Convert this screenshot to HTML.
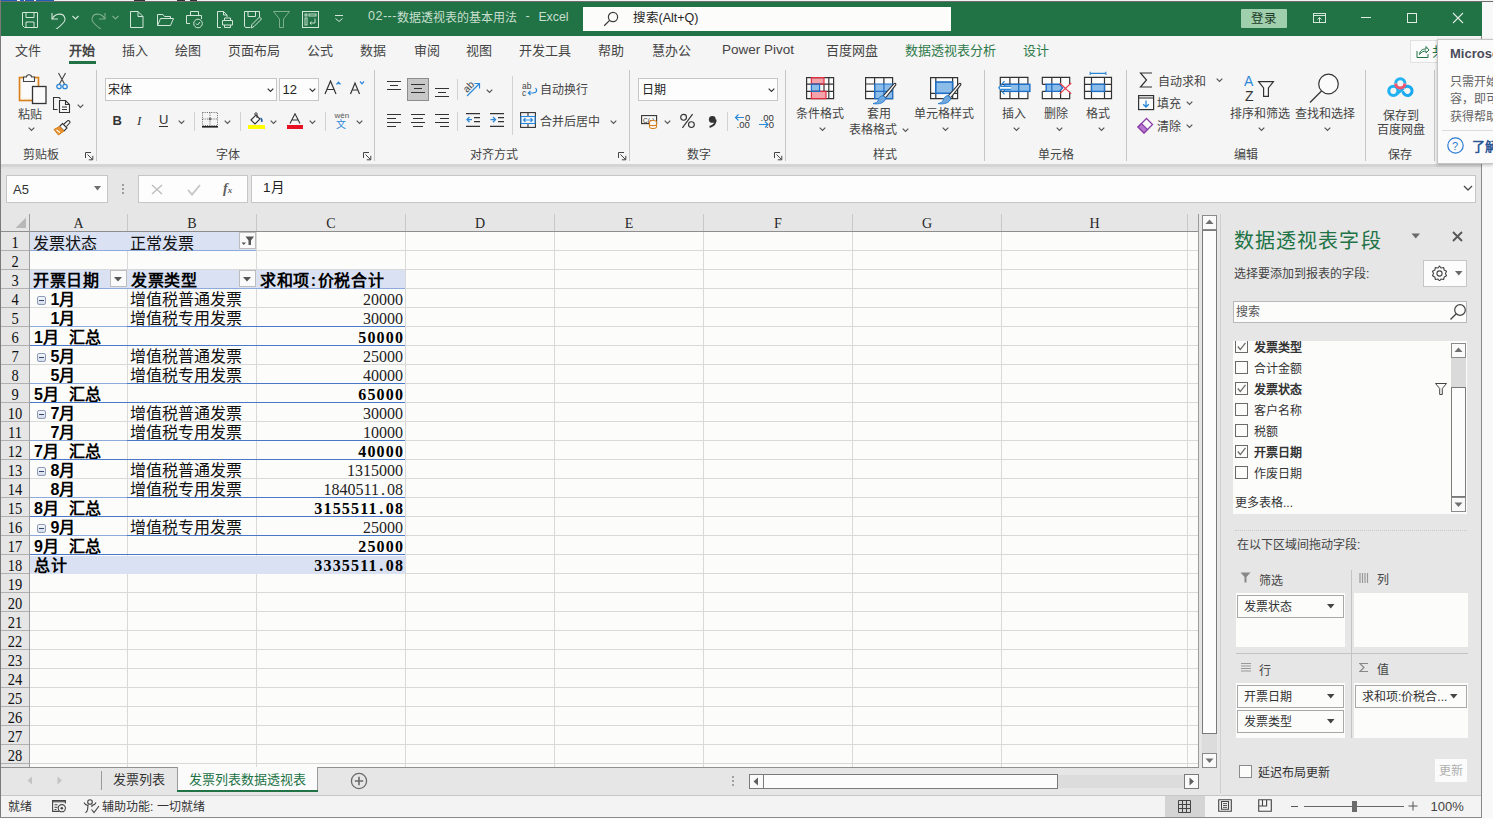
<!DOCTYPE html><html lang="zh-CN"><head><meta charset="utf-8"><style>
html,body{margin:0;padding:0;}body{width:1493px;height:819px;overflow:hidden;position:relative;background:#f7f7f7;font-family:"Liberation Sans",sans-serif;}
div,svg{position:absolute;box-sizing:border-box;white-space:nowrap;}
</style></head><body>
<div style="left:0px;top:0px;width:1493px;height:2px;background:#6d6d6d"></div>
<div style="left:0px;top:0px;width:1493px;height:1px;background:#f2f2f2"></div>
<div style="left:0px;top:0px;width:17px;height:1px;background:#1f5fb8"></div>
<div style="left:20px;top:0px;width:4px;height:1px;background:#1f5fb8"></div>
<div style="left:25px;top:0px;width:9px;height:1px;background:#1f5fb8"></div>
<div style="left:36px;top:0px;width:18px;height:1px;background:#1f5fb8"></div>
<div style="left:134px;top:0px;width:11px;height:1px;background:#333"></div>
<div style="left:177px;top:0px;width:8px;height:1px;background:#333"></div>
<div style="left:190px;top:0px;width:7px;height:1px;background:#333"></div>
<div style="left:0px;top:2px;width:1482px;height:34px;background:#217346"></div>
<div style="left:0px;top:0px;width:1px;height:819px;background:#7a7a7a"></div>
<div style="left:1481px;top:36px;width:1px;height:783px;background:#8a8a8a"></div>
<div style="left:1482px;top:2px;width:11px;height:817px;background:#f8f8f8"></div>
<div style="left:368px;top:10.38px;font-size:12.5px;line-height:12.5px;color:#c8dfce;font-family:'Liberation Sans',sans-serif;letter-spacing:0.5px">02---</div>
<div style="left:397.2px;top:12.40px;font-size:12px;line-height:12px;color:#c8dfce;font-family:'Liberation Sans',sans-serif;">数据透视表的基本用法</div>
<div style="left:525.5px;top:10.38px;font-size:12.5px;line-height:12.5px;color:#c8dfce;font-family:'Liberation Sans',sans-serif;">-</div>
<div style="left:538.4px;top:10.90px;font-size:12.3px;line-height:12.3px;color:#c8dfce;font-family:'Liberation Sans',sans-serif;">Excel</div>
<div style="left:583px;top:7px;width:368px;height:24px;background:#fcfcfa"></div>
<svg style="left:603px;top:11px;" width="16" height="16" viewBox="0 0 16 16"><circle cx="10" cy="6" r="4.6" fill="none" stroke="#3c3c3c" stroke-width="1.2"/><line x1="6.6" y1="9.4" x2="1.2" y2="14.8" stroke="#3c3c3c" stroke-width="1.3"/></svg>
<div style="left:632.5px;top:12.42px;font-size:12.5px;line-height:12.5px;color:#262626;font-family:'Liberation Sans',sans-serif;">搜索(Alt+Q)</div>
<div style="left:1241px;top:9px;width:46px;height:19px;background:#9fcfad;border-radius:1px"></div>
<div style="left:1251px;top:13.42px;font-size:12.5px;line-height:12.5px;color:#1d3b27;font-family:'Liberation Sans',sans-serif;">登录</div>
<svg style="left:1312px;top:12px;" width="16" height="12" viewBox="0 0 16 12"><rect x="1.5" y="1.5" width="12" height="9" fill="none" stroke="#d5e6da" stroke-width="1"/><line x1="1.5" y1="3.5" x2="13.5" y2="3.5" stroke="#d5e6da"/><path d="M7.5 10 V5.5 M5.5 7.5 L7.5 5.5 L9.5 7.5" fill="none" stroke="#d5e6da"/></svg>
<div style="left:1361px;top:17px;width:10px;height:1px;background:#e0ece3"></div>
<div style="left:1407px;top:13px;width:10px;height:10px;border:1px solid #e0ece3"></div>
<svg style="left:1452px;top:12px;" width="12" height="12" viewBox="0 0 12 12"><path d="M1 1 L11 11 M11 1 L1 11" stroke="#e0ece3" stroke-width="1.1"/></svg>
<svg style="left:21px;top:11px;" width="18" height="18" viewBox="0 0 18 18"><path d="M1.5 1.5 H16.5 V16.5 H3.5 L1.5 14.5 Z" fill="none" stroke="#d4e6d9"/><path d="M5 1.5 V6.5 H13 V1.5" fill="none" stroke="#d4e6d9"/><path d="M5 16.5 V11 H13 V16.5" fill="none" stroke="#d4e6d9"/></svg>
<svg style="left:50px;top:11px;" width="18" height="18" viewBox="0 0 18 18"><path d="M2 2 V8 H8" fill="none" stroke="#d4e6d9" stroke-width="1.1"/><path d="M2 8 C5 2 14 1 15 8 C15.5 11 12 14 5 19" fill="none" stroke="#d4e6d9" stroke-width="1.1"/></svg>
<svg style="left:72px;top:15px;" width="8" height="6" viewBox="0 0 8 6"><path d="M0.5 1 L3.5 4 L6.5 1" fill="none" stroke="#d4e6d9" stroke-width="1.1"/></svg>
<svg style="left:90px;top:11px;" width="18" height="18" viewBox="0 0 18 18"><path d="M15 2 V8 H9" fill="none" stroke="#7fae8c" stroke-width="1.1"/><path d="M15 8 C12 2 3 1 2 8 C1.5 11 5 14 12 19" fill="none" stroke="#7fae8c" stroke-width="1.1"/></svg>
<svg style="left:112px;top:15px;" width="8" height="6" viewBox="0 0 8 6"><path d="M0.5 1 L3.5 4 L6.5 1" fill="none" stroke="#7fae8c" stroke-width="1.1"/></svg>
<svg style="left:130px;top:11px;" width="14" height="18" viewBox="0 0 14 18"><path d="M0.5 0.5 H8 L13 5.5 V16.5 H0.5 Z M8 0.5 V5.5 H13" fill="none" stroke="#d4e6d9"/></svg>
<svg style="left:157px;top:13px;" width="18" height="14" viewBox="0 0 18 14"><path d="M0.5 12.5 V1.5 H6 L7.5 3.5 H13.5 V5.5 M0.5 12.5 L3.5 5.5 H16.5 L13.5 12.5 Z" fill="none" stroke="#d4e6d9"/></svg>
<svg style="left:186px;top:11px;" width="18" height="18" viewBox="0 0 18 18"><path d="M4.5 4.5 V0.5 H12.5 V4.5 M4 12.5 H0.5 V4.5 H15.5 V8" fill="none" stroke="#d4e6d9"/><circle cx="12" cy="12.5" r="4.3" fill="none" stroke="#d4e6d9"/><path d="M10 12.5 L11.5 14 L14 11" fill="none" stroke="#d4e6d9"/></svg>
<svg style="left:217px;top:11px;" width="16" height="18" viewBox="0 0 16 18"><path d="M4 16.5 H0.5 V0.5 H6.5 L10 4 M6.5 0.5 V4 H10 V6" fill="none" stroke="#d4e6d9"/><path d="M5.5 9.5 H15.5 V14 H5.5 Z M7.5 9.5 V7 H13.5 V9.5 M7.5 14 V16.5 H13.5 V14" fill="none" stroke="#d4e6d9"/></svg>
<svg style="left:244px;top:11px;" width="18" height="18" viewBox="0 0 18 18"><path d="M6 16.5 H1.5 L0.5 15 V0.5 H15.5 V6 M4 0.5 V5.5 H11.5 V0.5" fill="none" stroke="#d4e6d9"/><path d="M7 17 L8 13.5 L15.5 6 L17.5 8 L10 15.5 Z" fill="none" stroke="#d4e6d9"/></svg>
<svg style="left:273px;top:11px;" width="18" height="18" viewBox="0 0 18 18"><path d="M0.5 0.5 H16.5 L10.5 8 V16.5 H6.5 V8 Z" fill="none" stroke="#7fae8c"/></svg>
<svg style="left:302px;top:11px;" width="18" height="18" viewBox="0 0 18 18"><rect x="0.5" y="0.5" width="16" height="16" fill="none" stroke="#d4e6d9"/><rect x="3" y="3" width="2" height="2" fill="none" stroke="#d4e6d9" stroke-width="0.9"/><rect x="7" y="3" width="7" height="2" fill="none" stroke="#d4e6d9" stroke-width="0.9"/><rect x="3" y="7" width="2" height="7" fill="none" stroke="#d4e6d9" stroke-width="0.9"/><path d="M13 7.5 V12 H8 M9.5 10.5 L8 12 L9.5 13.5" fill="none" stroke="#d4e6d9" stroke-width="0.9"/></svg>
<svg style="left:334px;top:15px;" width="10" height="8" viewBox="0 0 10 8"><line x1="1" y1="0.5" x2="9" y2="0.5" stroke="#d4e6d9"/><path d="M1.5 3.5 L5 6.5 L8.5 3.5" fill="none" stroke="#d4e6d9"/></svg>
<div style="left:1px;top:36px;width:1480px;height:128px;background:#f5f5f5"></div>
<div style="left:15px;top:43.64px;font-size:13px;line-height:13px;color:#444444;font-family:'Liberation Sans',sans-serif;">文件</div>
<div style="left:69px;top:43.64px;font-size:13px;line-height:13px;color:#444444;font-family:'Liberation Sans',sans-serif;font-weight:bold;">开始</div>
<div style="left:122px;top:43.64px;font-size:13px;line-height:13px;color:#444444;font-family:'Liberation Sans',sans-serif;">插入</div>
<div style="left:175px;top:43.64px;font-size:13px;line-height:13px;color:#444444;font-family:'Liberation Sans',sans-serif;">绘图</div>
<div style="left:228px;top:43.64px;font-size:13px;line-height:13px;color:#444444;font-family:'Liberation Sans',sans-serif;">页面布局</div>
<div style="left:307px;top:43.64px;font-size:13px;line-height:13px;color:#444444;font-family:'Liberation Sans',sans-serif;">公式</div>
<div style="left:360px;top:43.64px;font-size:13px;line-height:13px;color:#444444;font-family:'Liberation Sans',sans-serif;">数据</div>
<div style="left:414px;top:43.64px;font-size:13px;line-height:13px;color:#444444;font-family:'Liberation Sans',sans-serif;">审阅</div>
<div style="left:466px;top:43.64px;font-size:13px;line-height:13px;color:#444444;font-family:'Liberation Sans',sans-serif;">视图</div>
<div style="left:519px;top:43.64px;font-size:13px;line-height:13px;color:#444444;font-family:'Liberation Sans',sans-serif;">开发工具</div>
<div style="left:598px;top:43.64px;font-size:13px;line-height:13px;color:#444444;font-family:'Liberation Sans',sans-serif;">帮助</div>
<div style="left:652px;top:43.64px;font-size:13px;line-height:13px;color:#444444;font-family:'Liberation Sans',sans-serif;">慧办公</div>
<div style="left:826px;top:43.64px;font-size:13px;line-height:13px;color:#444444;font-family:'Liberation Sans',sans-serif;">百度网盘</div>
<div style="left:722px;top:42.74px;font-size:13.5px;line-height:13.5px;color:#444444;font-family:'Liberation Sans',sans-serif;">Power Pivot</div>
<div style="left:905px;top:43.64px;font-size:13px;line-height:13px;color:#2f7a4a;font-family:'Liberation Sans',sans-serif;">数据透视表分析</div>
<div style="left:1023px;top:43.64px;font-size:13px;line-height:13px;color:#2f7a4a;font-family:'Liberation Sans',sans-serif;">设计</div>
<div style="left:69px;top:61px;width:27px;height:3px;background:#217346"></div>
<div style="left:1410px;top:40px;width:30px;height:23px;background:#fbfbfb;border:1px solid #e1e1e1"></div>
<svg style="left:1416px;top:45px;" width="14" height="14" viewBox="0 0 14 14"><path d="M1 6 V12.5 H12 V9" fill="none" stroke="#217346"/><path d="M3.5 9.5 C4 5 7 4 10 4 V1.5 L13 5 L10 8 V6 C7.5 6 5 7 3.5 9.5Z" fill="none" stroke="#217346"/></svg>
<div style="left:1px;top:166px;width:1480px;height:48px;background:#e6e6e6"></div>
<div style="left:1px;top:164px;width:1480px;height:3px;background:#d4d4d4"></div>
<div style="left:1px;top:167px;width:1480px;height:2px;background:#e1e1e1"></div>
<div style="left:6px;top:175px;width:102px;height:28px;background:#fdfdfd;border:1px solid #c6c6c6"></div>
<div style="left:13px;top:183.31px;font-size:13px;line-height:13px;color:#333;font-family:'Liberation Sans',sans-serif;">A5</div>
<svg style="left:94px;top:186px;" width="8" height="5" viewBox="0 0 8 5"><path d="M0 0 H7 L3.5 4.5Z" fill="#6e6e6e"/></svg>
<div style="left:122px;top:184px;width:2px;height:2px;background:#9c9c9c"></div>
<div style="left:122px;top:188px;width:2px;height:2px;background:#9c9c9c"></div>
<div style="left:122px;top:192px;width:2px;height:2px;background:#9c9c9c"></div>
<div style="left:138px;top:175px;width:110px;height:28px;background:#fdfdfd;border:1px solid #c6c6c6"></div>
<svg style="left:151px;top:184px;" width="12" height="11" viewBox="0 0 12 11"><path d="M1 1 L11 10 M11 1 L1 10" stroke="#bdbdbd" stroke-width="1.4"/></svg>
<svg style="left:187px;top:184px;" width="14" height="12" viewBox="0 0 14 12"><path d="M1 6 L5 10.5 L13 1" fill="none" stroke="#c5c5c5" stroke-width="1.8"/></svg>
<div style="left:223px;top:182.18px;font-size:14px;line-height:14px;color:#5f5f5f;font-family:'Liberation Serif',serif;font-weight:bold;"><i>f</i><span style='font-size:9px'><i>x</i></span></div>
<div style="left:251px;top:175px;width:1225px;height:28px;background:#fdfdfd;border:1px solid #c6c6c6"></div>
<div style="left:263px;top:181.45px;font-size:13.5px;line-height:13.5px;color:#222;font-family:'Liberation Sans',sans-serif;">1月</div>
<svg style="left:1463px;top:185px;" width="10" height="7" viewBox="0 0 10 7"><path d="M1 1 L5 5 L9 1" fill="none" stroke="#505050" stroke-width="1.4"/></svg>
<div style="left:1px;top:214px;width:1198px;height:553px;background:#e6e6e6"></div>
<div style="left:30px;top:232px;width:1168px;height:535px;background:#fcfcfb"></div>
<div style="left:30px;top:250px;width:1168px;height:1px;background:#d9d9d9"></div>
<div style="left:30px;top:269px;width:1168px;height:1px;background:#d9d9d9"></div>
<div style="left:30px;top:288px;width:1168px;height:1px;background:#d9d9d9"></div>
<div style="left:30px;top:307px;width:1168px;height:1px;background:#d9d9d9"></div>
<div style="left:30px;top:326px;width:1168px;height:1px;background:#d9d9d9"></div>
<div style="left:30px;top:345px;width:1168px;height:1px;background:#d9d9d9"></div>
<div style="left:30px;top:364px;width:1168px;height:1px;background:#d9d9d9"></div>
<div style="left:30px;top:383px;width:1168px;height:1px;background:#d9d9d9"></div>
<div style="left:30px;top:402px;width:1168px;height:1px;background:#d9d9d9"></div>
<div style="left:30px;top:421px;width:1168px;height:1px;background:#d9d9d9"></div>
<div style="left:30px;top:440px;width:1168px;height:1px;background:#d9d9d9"></div>
<div style="left:30px;top:459px;width:1168px;height:1px;background:#d9d9d9"></div>
<div style="left:30px;top:478px;width:1168px;height:1px;background:#d9d9d9"></div>
<div style="left:30px;top:497px;width:1168px;height:1px;background:#d9d9d9"></div>
<div style="left:30px;top:516px;width:1168px;height:1px;background:#d9d9d9"></div>
<div style="left:30px;top:535px;width:1168px;height:1px;background:#d9d9d9"></div>
<div style="left:30px;top:554px;width:1168px;height:1px;background:#d9d9d9"></div>
<div style="left:30px;top:573px;width:1168px;height:1px;background:#d9d9d9"></div>
<div style="left:30px;top:592px;width:1168px;height:1px;background:#d9d9d9"></div>
<div style="left:30px;top:611px;width:1168px;height:1px;background:#d9d9d9"></div>
<div style="left:30px;top:630px;width:1168px;height:1px;background:#d9d9d9"></div>
<div style="left:30px;top:649px;width:1168px;height:1px;background:#d9d9d9"></div>
<div style="left:30px;top:668px;width:1168px;height:1px;background:#d9d9d9"></div>
<div style="left:30px;top:687px;width:1168px;height:1px;background:#d9d9d9"></div>
<div style="left:30px;top:706px;width:1168px;height:1px;background:#d9d9d9"></div>
<div style="left:30px;top:725px;width:1168px;height:1px;background:#d9d9d9"></div>
<div style="left:30px;top:744px;width:1168px;height:1px;background:#d9d9d9"></div>
<div style="left:30px;top:763px;width:1168px;height:1px;background:#d9d9d9"></div>
<div style="left:127px;top:232px;width:1px;height:535px;background:#d9d9d9"></div>
<div style="left:256px;top:232px;width:1px;height:535px;background:#d9d9d9"></div>
<div style="left:405px;top:232px;width:1px;height:535px;background:#d9d9d9"></div>
<div style="left:554px;top:232px;width:1px;height:535px;background:#d9d9d9"></div>
<div style="left:703px;top:232px;width:1px;height:535px;background:#d9d9d9"></div>
<div style="left:852px;top:232px;width:1px;height:535px;background:#d9d9d9"></div>
<div style="left:1001px;top:232px;width:1px;height:535px;background:#d9d9d9"></div>
<div style="left:1187px;top:232px;width:1px;height:535px;background:#d9d9d9"></div>
<div style="left:127px;top:214px;width:1px;height:17px;background:#c8c8c8"></div>
<div style="left:48.599999999999994px;width:60px;text-align:center;top:217.18px;font-size:14px;line-height:14px;color:#262626;font-family:'Liberation Serif',serif;">A</div>
<div style="left:256px;top:214px;width:1px;height:17px;background:#c8c8c8"></div>
<div style="left:162.0px;width:60px;text-align:center;top:217.18px;font-size:14px;line-height:14px;color:#262626;font-family:'Liberation Serif',serif;">B</div>
<div style="left:405px;top:214px;width:1px;height:17px;background:#c8c8c8"></div>
<div style="left:300.9px;width:60px;text-align:center;top:217.18px;font-size:14px;line-height:14px;color:#262626;font-family:'Liberation Serif',serif;">C</div>
<div style="left:554px;top:214px;width:1px;height:17px;background:#c8c8c8"></div>
<div style="left:450.0px;width:60px;text-align:center;top:217.18px;font-size:14px;line-height:14px;color:#262626;font-family:'Liberation Serif',serif;">D</div>
<div style="left:703px;top:214px;width:1px;height:17px;background:#c8c8c8"></div>
<div style="left:599.0px;width:60px;text-align:center;top:217.18px;font-size:14px;line-height:14px;color:#262626;font-family:'Liberation Serif',serif;">E</div>
<div style="left:852px;top:214px;width:1px;height:17px;background:#c8c8c8"></div>
<div style="left:748.0px;width:60px;text-align:center;top:217.18px;font-size:14px;line-height:14px;color:#262626;font-family:'Liberation Serif',serif;">F</div>
<div style="left:1001px;top:214px;width:1px;height:17px;background:#c8c8c8"></div>
<div style="left:896.95px;width:60px;text-align:center;top:217.18px;font-size:14px;line-height:14px;color:#262626;font-family:'Liberation Serif',serif;">G</div>
<div style="left:1187px;top:214px;width:1px;height:17px;background:#c8c8c8"></div>
<div style="left:1064.5px;width:60px;text-align:center;top:217.18px;font-size:14px;line-height:14px;color:#262626;font-family:'Liberation Serif',serif;">H</div>
<div style="left:1px;top:231px;width:1198px;height:1px;background:#8e8e8e"></div>
<div style="left:29px;top:214px;width:1px;height:553px;background:#9c9c9c"></div>
<svg style="left:15px;top:217px;" width="12" height="12" viewBox="0 0 12 12"><path d="M11 0.5 V11 H0.5 Z" fill="#b8b8b8"/></svg>
<div style="left:1.0px;width:28px;text-align:center;top:235.31px;font-size:14.5px;line-height:14.5px;color:#111;font-family:'Liberation Serif',serif;transform:scaleY(1.12)">1</div>
<div style="left:1px;top:250px;width:28px;height:1px;background:#b0b0b0"></div>
<div style="left:1.0px;width:28px;text-align:center;top:254.31px;font-size:14.5px;line-height:14.5px;color:#111;font-family:'Liberation Serif',serif;transform:scaleY(1.12)">2</div>
<div style="left:1px;top:269px;width:28px;height:1px;background:#b0b0b0"></div>
<div style="left:1.0px;width:28px;text-align:center;top:273.31px;font-size:14.5px;line-height:14.5px;color:#111;font-family:'Liberation Serif',serif;transform:scaleY(1.12)">3</div>
<div style="left:1px;top:288px;width:28px;height:1px;background:#b0b0b0"></div>
<div style="left:1.0px;width:28px;text-align:center;top:292.31px;font-size:14.5px;line-height:14.5px;color:#111;font-family:'Liberation Serif',serif;transform:scaleY(1.12)">4</div>
<div style="left:1px;top:307px;width:28px;height:1px;background:#b0b0b0"></div>
<div style="left:1.0px;width:28px;text-align:center;top:311.31px;font-size:14.5px;line-height:14.5px;color:#111;font-family:'Liberation Serif',serif;transform:scaleY(1.12)">5</div>
<div style="left:1px;top:326px;width:28px;height:1px;background:#b0b0b0"></div>
<div style="left:1.0px;width:28px;text-align:center;top:330.31px;font-size:14.5px;line-height:14.5px;color:#111;font-family:'Liberation Serif',serif;transform:scaleY(1.12)">6</div>
<div style="left:1px;top:345px;width:28px;height:1px;background:#b0b0b0"></div>
<div style="left:1.0px;width:28px;text-align:center;top:349.31px;font-size:14.5px;line-height:14.5px;color:#111;font-family:'Liberation Serif',serif;transform:scaleY(1.12)">7</div>
<div style="left:1px;top:364px;width:28px;height:1px;background:#b0b0b0"></div>
<div style="left:1.0px;width:28px;text-align:center;top:368.31px;font-size:14.5px;line-height:14.5px;color:#111;font-family:'Liberation Serif',serif;transform:scaleY(1.12)">8</div>
<div style="left:1px;top:383px;width:28px;height:1px;background:#b0b0b0"></div>
<div style="left:1.0px;width:28px;text-align:center;top:387.31px;font-size:14.5px;line-height:14.5px;color:#111;font-family:'Liberation Serif',serif;transform:scaleY(1.12)">9</div>
<div style="left:1px;top:402px;width:28px;height:1px;background:#b0b0b0"></div>
<div style="left:1.0px;width:28px;text-align:center;top:406.31px;font-size:14.5px;line-height:14.5px;color:#111;font-family:'Liberation Serif',serif;transform:scaleY(1.12)">10</div>
<div style="left:1px;top:421px;width:28px;height:1px;background:#b0b0b0"></div>
<div style="left:1.0px;width:28px;text-align:center;top:425.31px;font-size:14.5px;line-height:14.5px;color:#111;font-family:'Liberation Serif',serif;transform:scaleY(1.12)">11</div>
<div style="left:1px;top:440px;width:28px;height:1px;background:#b0b0b0"></div>
<div style="left:1.0px;width:28px;text-align:center;top:444.31px;font-size:14.5px;line-height:14.5px;color:#111;font-family:'Liberation Serif',serif;transform:scaleY(1.12)">12</div>
<div style="left:1px;top:459px;width:28px;height:1px;background:#b0b0b0"></div>
<div style="left:1.0px;width:28px;text-align:center;top:463.31px;font-size:14.5px;line-height:14.5px;color:#111;font-family:'Liberation Serif',serif;transform:scaleY(1.12)">13</div>
<div style="left:1px;top:478px;width:28px;height:1px;background:#b0b0b0"></div>
<div style="left:1.0px;width:28px;text-align:center;top:482.31px;font-size:14.5px;line-height:14.5px;color:#111;font-family:'Liberation Serif',serif;transform:scaleY(1.12)">14</div>
<div style="left:1px;top:497px;width:28px;height:1px;background:#b0b0b0"></div>
<div style="left:1.0px;width:28px;text-align:center;top:501.31px;font-size:14.5px;line-height:14.5px;color:#111;font-family:'Liberation Serif',serif;transform:scaleY(1.12)">15</div>
<div style="left:1px;top:516px;width:28px;height:1px;background:#b0b0b0"></div>
<div style="left:1.0px;width:28px;text-align:center;top:520.32px;font-size:14.5px;line-height:14.5px;color:#111;font-family:'Liberation Serif',serif;transform:scaleY(1.12)">16</div>
<div style="left:1px;top:535px;width:28px;height:1px;background:#b0b0b0"></div>
<div style="left:1.0px;width:28px;text-align:center;top:539.32px;font-size:14.5px;line-height:14.5px;color:#111;font-family:'Liberation Serif',serif;transform:scaleY(1.12)">17</div>
<div style="left:1px;top:554px;width:28px;height:1px;background:#b0b0b0"></div>
<div style="left:1.0px;width:28px;text-align:center;top:558.32px;font-size:14.5px;line-height:14.5px;color:#111;font-family:'Liberation Serif',serif;transform:scaleY(1.12)">18</div>
<div style="left:1px;top:573px;width:28px;height:1px;background:#b0b0b0"></div>
<div style="left:1.0px;width:28px;text-align:center;top:577.32px;font-size:14.5px;line-height:14.5px;color:#111;font-family:'Liberation Serif',serif;transform:scaleY(1.12)">19</div>
<div style="left:1px;top:592px;width:28px;height:1px;background:#b0b0b0"></div>
<div style="left:1.0px;width:28px;text-align:center;top:596.32px;font-size:14.5px;line-height:14.5px;color:#111;font-family:'Liberation Serif',serif;transform:scaleY(1.12)">20</div>
<div style="left:1px;top:611px;width:28px;height:1px;background:#b0b0b0"></div>
<div style="left:1.0px;width:28px;text-align:center;top:615.32px;font-size:14.5px;line-height:14.5px;color:#111;font-family:'Liberation Serif',serif;transform:scaleY(1.12)">21</div>
<div style="left:1px;top:630px;width:28px;height:1px;background:#b0b0b0"></div>
<div style="left:1.0px;width:28px;text-align:center;top:634.32px;font-size:14.5px;line-height:14.5px;color:#111;font-family:'Liberation Serif',serif;transform:scaleY(1.12)">22</div>
<div style="left:1px;top:649px;width:28px;height:1px;background:#b0b0b0"></div>
<div style="left:1.0px;width:28px;text-align:center;top:653.32px;font-size:14.5px;line-height:14.5px;color:#111;font-family:'Liberation Serif',serif;transform:scaleY(1.12)">23</div>
<div style="left:1px;top:668px;width:28px;height:1px;background:#b0b0b0"></div>
<div style="left:1.0px;width:28px;text-align:center;top:672.32px;font-size:14.5px;line-height:14.5px;color:#111;font-family:'Liberation Serif',serif;transform:scaleY(1.12)">24</div>
<div style="left:1px;top:687px;width:28px;height:1px;background:#b0b0b0"></div>
<div style="left:1.0px;width:28px;text-align:center;top:691.32px;font-size:14.5px;line-height:14.5px;color:#111;font-family:'Liberation Serif',serif;transform:scaleY(1.12)">25</div>
<div style="left:1px;top:706px;width:28px;height:1px;background:#b0b0b0"></div>
<div style="left:1.0px;width:28px;text-align:center;top:710.32px;font-size:14.5px;line-height:14.5px;color:#111;font-family:'Liberation Serif',serif;transform:scaleY(1.12)">26</div>
<div style="left:1px;top:725px;width:28px;height:1px;background:#b0b0b0"></div>
<div style="left:1.0px;width:28px;text-align:center;top:729.32px;font-size:14.5px;line-height:14.5px;color:#111;font-family:'Liberation Serif',serif;transform:scaleY(1.12)">27</div>
<div style="left:1px;top:744px;width:28px;height:1px;background:#b0b0b0"></div>
<div style="left:1.0px;width:28px;text-align:center;top:748.32px;font-size:14.5px;line-height:14.5px;color:#111;font-family:'Liberation Serif',serif;transform:scaleY(1.12)">28</div>
<div style="left:1px;top:763px;width:28px;height:1px;background:#b0b0b0"></div>
<div style="left:1198px;top:214px;width:1px;height:554px;background:#9a9a9a"></div>
<div style="left:1px;top:767px;width:1198px;height:1px;background:#8f8f8f"></div>
<div style="left:30px;top:232px;width:226px;height:18px;background:#d9e1f2"></div>
<div style="left:30px;top:250px;width:226px;height:1px;background:#8eaadc"></div>
<div style="left:30px;top:270px;width:375px;height:18px;background:#d9e1f2"></div>
<div style="left:30px;top:288px;width:375px;height:1px;background:#8eaadc"></div>
<div style="left:30px;top:556px;width:375px;height:18px;background:#d9e1f2"></div>
<div style="left:33px;top:235.54px;font-size:16px;line-height:16px;color:#111;font-family:'Liberation Sans',sans-serif;">发票状态</div>
<div style="left:130px;top:235.54px;font-size:16px;line-height:16px;color:#111;font-family:'Liberation Sans',sans-serif;">正常发票</div>
<div style="left:239px;top:232px;width:17px;height:17px;background:#fafafa;border:1px solid #bdbdbd"></div>
<svg style="left:241px;top:235px;" width="14" height="12" viewBox="0 0 14 12"><path d="M4.5 1.5 H13 L10 5.5 V10 H7.5 V5.5 Z" fill="#555"/><path d="M0.5 7.5 H5 L2.75 10Z" fill="#555"/></svg>
<div style="left:33px;top:273.04px;font-size:16px;line-height:16px;color:#000;font-family:'Liberation Sans',sans-serif;font-weight:bold;letter-spacing:0.6px">开票日期</div>
<div style="left:131px;top:273.04px;font-size:16px;line-height:16px;color:#000;font-family:'Liberation Sans',sans-serif;font-weight:bold;letter-spacing:0.6px">发票类型</div>
<div style="left:260px;top:273.04px;font-size:16px;line-height:16px;color:#000;font-family:'Liberation Sans',sans-serif;font-weight:bold;letter-spacing:0.6px">求和项<span style='display:inline-block;width:8px;text-align:center'>:</span>价税合计</div>
<div style="left:110px;top:270px;width:17px;height:17px;background:#fafafa;border:1px solid #bdbdbd"></div>
<svg style="left:114px;top:277px;" width="9" height="5" viewBox="0 0 9 5"><path d="M0 0 H8 L4 4.5Z" fill="#555"/></svg>
<div style="left:239px;top:270px;width:17px;height:17px;background:#fafafa;border:1px solid #bdbdbd"></div>
<svg style="left:243px;top:277px;" width="9" height="5" viewBox="0 0 9 5"><path d="M0 0 H8 L4 4.5Z" fill="#555"/></svg>
<div style="left:37px;top:296px;width:9px;height:9px;background:linear-gradient(#f4f6fb,#d5dcea);border:1px solid #8d9bb8;border-radius:2px"></div>
<div style="left:39px;top:300px;width:5px;height:1.3px;background:#34466a"></div>
<div style="left:50.5px;top:291.54px;font-size:16px;line-height:16px;color:#000;font-family:'Liberation Sans',sans-serif;font-weight:bold;">1月</div>
<div style="left:130px;top:291.54px;font-size:16px;line-height:16px;color:#111;font-family:'Liberation Sans',sans-serif;">增值税普通发票</div>
<div style="left:263px;width:140px;text-align:right;top:291.92px;font-size:16px;line-height:16px;color:#222;font-family:'Liberation Serif',serif;">20000</div>
<div style="left:50.5px;top:310.54px;font-size:16px;line-height:16px;color:#000;font-family:'Liberation Sans',sans-serif;font-weight:bold;">1月</div>
<div style="left:130px;top:310.54px;font-size:16px;line-height:16px;color:#111;font-family:'Liberation Sans',sans-serif;">增值税专用发票</div>
<div style="left:263px;width:140px;text-align:right;top:310.92px;font-size:16px;line-height:16px;color:#222;font-family:'Liberation Serif',serif;">30000</div>
<div style="left:34px;top:330.04px;font-size:16px;line-height:16px;color:#000;font-family:'Liberation Sans',sans-serif;font-weight:bold;letter-spacing:0.3px">1月<span style='display:inline-block;width:9px'></span>汇总</div>
<div style="left:264.2px;width:140px;text-align:right;top:329.92px;font-size:16px;line-height:16px;color:#000;font-family:'Liberation Serif',serif;font-weight:bold;letter-spacing:1.2px">50000</div>
<div style="left:30px;top:326px;width:98px;height:1px;background:#8eaadc"></div>
<div style="left:127px;top:326px;width:278px;height:1px;background:#4a78c8"></div>
<div style="left:30px;top:345px;width:375px;height:1px;background:#4a78c8"></div>
<div style="left:37px;top:353px;width:9px;height:9px;background:linear-gradient(#f4f6fb,#d5dcea);border:1px solid #8d9bb8;border-radius:2px"></div>
<div style="left:39px;top:357px;width:5px;height:1.3px;background:#34466a"></div>
<div style="left:50.5px;top:348.54px;font-size:16px;line-height:16px;color:#000;font-family:'Liberation Sans',sans-serif;font-weight:bold;">5月</div>
<div style="left:130px;top:348.54px;font-size:16px;line-height:16px;color:#111;font-family:'Liberation Sans',sans-serif;">增值税普通发票</div>
<div style="left:263px;width:140px;text-align:right;top:348.92px;font-size:16px;line-height:16px;color:#222;font-family:'Liberation Serif',serif;">25000</div>
<div style="left:50.5px;top:367.54px;font-size:16px;line-height:16px;color:#000;font-family:'Liberation Sans',sans-serif;font-weight:bold;">5月</div>
<div style="left:130px;top:367.54px;font-size:16px;line-height:16px;color:#111;font-family:'Liberation Sans',sans-serif;">增值税专用发票</div>
<div style="left:263px;width:140px;text-align:right;top:367.92px;font-size:16px;line-height:16px;color:#222;font-family:'Liberation Serif',serif;">40000</div>
<div style="left:34px;top:387.04px;font-size:16px;line-height:16px;color:#000;font-family:'Liberation Sans',sans-serif;font-weight:bold;letter-spacing:0.3px">5月<span style='display:inline-block;width:9px'></span>汇总</div>
<div style="left:264.2px;width:140px;text-align:right;top:386.92px;font-size:16px;line-height:16px;color:#000;font-family:'Liberation Serif',serif;font-weight:bold;letter-spacing:1.2px">65000</div>
<div style="left:30px;top:383px;width:98px;height:1px;background:#8eaadc"></div>
<div style="left:127px;top:383px;width:278px;height:1px;background:#4a78c8"></div>
<div style="left:30px;top:402px;width:375px;height:1px;background:#4a78c8"></div>
<div style="left:37px;top:410px;width:9px;height:9px;background:linear-gradient(#f4f6fb,#d5dcea);border:1px solid #8d9bb8;border-radius:2px"></div>
<div style="left:39px;top:414px;width:5px;height:1.3px;background:#34466a"></div>
<div style="left:50.5px;top:405.54px;font-size:16px;line-height:16px;color:#000;font-family:'Liberation Sans',sans-serif;font-weight:bold;">7月</div>
<div style="left:130px;top:405.54px;font-size:16px;line-height:16px;color:#111;font-family:'Liberation Sans',sans-serif;">增值税普通发票</div>
<div style="left:263px;width:140px;text-align:right;top:405.92px;font-size:16px;line-height:16px;color:#222;font-family:'Liberation Serif',serif;">30000</div>
<div style="left:50.5px;top:424.54px;font-size:16px;line-height:16px;color:#000;font-family:'Liberation Sans',sans-serif;font-weight:bold;">7月</div>
<div style="left:130px;top:424.54px;font-size:16px;line-height:16px;color:#111;font-family:'Liberation Sans',sans-serif;">增值税专用发票</div>
<div style="left:263px;width:140px;text-align:right;top:424.92px;font-size:16px;line-height:16px;color:#222;font-family:'Liberation Serif',serif;">10000</div>
<div style="left:34px;top:444.04px;font-size:16px;line-height:16px;color:#000;font-family:'Liberation Sans',sans-serif;font-weight:bold;letter-spacing:0.3px">7月<span style='display:inline-block;width:9px'></span>汇总</div>
<div style="left:264.2px;width:140px;text-align:right;top:443.92px;font-size:16px;line-height:16px;color:#000;font-family:'Liberation Serif',serif;font-weight:bold;letter-spacing:1.2px">40000</div>
<div style="left:30px;top:440px;width:98px;height:1px;background:#8eaadc"></div>
<div style="left:127px;top:440px;width:278px;height:1px;background:#4a78c8"></div>
<div style="left:30px;top:459px;width:375px;height:1px;background:#4a78c8"></div>
<div style="left:37px;top:467px;width:9px;height:9px;background:linear-gradient(#f4f6fb,#d5dcea);border:1px solid #8d9bb8;border-radius:2px"></div>
<div style="left:39px;top:471px;width:5px;height:1.3px;background:#34466a"></div>
<div style="left:50.5px;top:462.54px;font-size:16px;line-height:16px;color:#000;font-family:'Liberation Sans',sans-serif;font-weight:bold;">8月</div>
<div style="left:130px;top:462.54px;font-size:16px;line-height:16px;color:#111;font-family:'Liberation Sans',sans-serif;">增值税普通发票</div>
<div style="left:263px;width:140px;text-align:right;top:462.92px;font-size:16px;line-height:16px;color:#222;font-family:'Liberation Serif',serif;">1315000</div>
<div style="left:50.5px;top:481.54px;font-size:16px;line-height:16px;color:#000;font-family:'Liberation Sans',sans-serif;font-weight:bold;">8月</div>
<div style="left:130px;top:481.54px;font-size:16px;line-height:16px;color:#111;font-family:'Liberation Sans',sans-serif;">增值税专用发票</div>
<div style="left:263px;width:140px;text-align:right;top:481.92px;font-size:16px;line-height:16px;color:#222;font-family:'Liberation Serif',serif;">1840511<span style='display:inline-block;width:8px;text-align:center'>.</span>08</div>
<div style="left:34px;top:501.04px;font-size:16px;line-height:16px;color:#000;font-family:'Liberation Sans',sans-serif;font-weight:bold;letter-spacing:0.3px">8月<span style='display:inline-block;width:9px'></span>汇总</div>
<div style="left:264.2px;width:140px;text-align:right;top:500.92px;font-size:16px;line-height:16px;color:#000;font-family:'Liberation Serif',serif;font-weight:bold;letter-spacing:1.2px">3155511<span style='display:inline-block;width:8px;text-align:center'>.</span>08</div>
<div style="left:30px;top:497px;width:98px;height:1px;background:#8eaadc"></div>
<div style="left:127px;top:497px;width:278px;height:1px;background:#4a78c8"></div>
<div style="left:30px;top:516px;width:375px;height:1px;background:#4a78c8"></div>
<div style="left:37px;top:524px;width:9px;height:9px;background:linear-gradient(#f4f6fb,#d5dcea);border:1px solid #8d9bb8;border-radius:2px"></div>
<div style="left:39px;top:528px;width:5px;height:1.3px;background:#34466a"></div>
<div style="left:50.5px;top:519.54px;font-size:16px;line-height:16px;color:#000;font-family:'Liberation Sans',sans-serif;font-weight:bold;">9月</div>
<div style="left:130px;top:519.54px;font-size:16px;line-height:16px;color:#111;font-family:'Liberation Sans',sans-serif;">增值税专用发票</div>
<div style="left:263px;width:140px;text-align:right;top:519.92px;font-size:16px;line-height:16px;color:#222;font-family:'Liberation Serif',serif;">25000</div>
<div style="left:34px;top:539.04px;font-size:16px;line-height:16px;color:#000;font-family:'Liberation Sans',sans-serif;font-weight:bold;letter-spacing:0.3px">9月<span style='display:inline-block;width:9px'></span>汇总</div>
<div style="left:264.2px;width:140px;text-align:right;top:538.92px;font-size:16px;line-height:16px;color:#000;font-family:'Liberation Serif',serif;font-weight:bold;letter-spacing:1.2px">25000</div>
<div style="left:30px;top:535px;width:98px;height:1px;background:#8eaadc"></div>
<div style="left:127px;top:535px;width:278px;height:1px;background:#4a78c8"></div>
<div style="left:30px;top:554px;width:375px;height:1px;background:#4a78c8"></div>
<div style="left:34px;top:557.54px;font-size:16px;line-height:16px;color:#000;font-family:'Liberation Sans',sans-serif;font-weight:bold;letter-spacing:0.6px">总计</div>
<div style="left:264.2px;width:140px;text-align:right;top:557.92px;font-size:16px;line-height:16px;color:#000;font-family:'Liberation Serif',serif;font-weight:bold;letter-spacing:1.2px">3335511<span style='display:inline-block;width:8px;text-align:center'>.</span>08</div>
<div style="left:1199px;top:214px;width:22px;height:554px;background:#e6e6e6"></div>
<div style="left:1202px;top:215px;width:15px;height:15px;background:#fafafa;border:1px solid #8a8a8a"></div>
<svg style="left:1205px;top:219px;" width="9" height="6" viewBox="0 0 9 6"><path d="M0.5 5 L4.5 0.5 L8.5 5Z" fill="#707070"/></svg>
<div style="left:1202px;top:230px;width:15px;height:504px;background:#fcfcfc;border:1px solid #7a7a7a"></div>
<div style="left:1202px;top:734px;width:15px;height:19px;background:#dcdcdc"></div>
<div style="left:1202px;top:753px;width:15px;height:15px;background:#fafafa;border:1px solid #8a8a8a"></div>
<svg style="left:1205px;top:758px;" width="9" height="6" viewBox="0 0 9 6"><path d="M0.5 0.5 L4.5 5 L8.5 0.5Z" fill="#707070"/></svg>
<div style="left:1220px;top:214px;width:1px;height:580px;background:#cfcfcf"></div>
<div style="left:1px;top:768px;width:1219px;height:27px;background:#e6e6e6"></div>
<svg style="left:27px;top:776px;" width="6" height="9" viewBox="0 0 6 9"><path d="M5 0.5 V8.5 L0.5 4.5Z" fill="#c4c4c4"/></svg>
<svg style="left:57px;top:776px;" width="6" height="9" viewBox="0 0 6 9"><path d="M0.5 0.5 V8.5 L5 4.5Z" fill="#c4c4c4"/></svg>
<div style="left:101px;top:771px;width:1px;height:19px;background:#9a9a9a"></div>
<div style="left:112.5px;top:773.44px;font-size:13px;line-height:13px;color:#333;font-family:'Liberation Sans',sans-serif;">发票列表</div>
<div style="left:177px;top:767px;width:141px;height:25px;background:#fbfbfb;border-left:1px solid #9a9a9a;border-right:1px solid #9a9a9a"></div>
<div style="left:177px;top:790px;width:141px;height:2px;background:#217346"></div>
<div style="left:189px;top:773.44px;font-size:13px;line-height:13px;color:#217346;font-family:'Liberation Sans',sans-serif;">发票列表数据透视表</div>
<svg style="left:350px;top:772px;" width="18" height="18" viewBox="0 0 18 18"><circle cx="9" cy="9" r="7.6" fill="none" stroke="#6a6a6a" stroke-width="1.3"/><path d="M9 4.8 V13.2 M4.8 9 H13.2" stroke="#6a6a6a" stroke-width="1.6"/></svg>
<div style="left:732px;top:776px;width:2px;height:2px;background:#a0a0a0"></div>
<div style="left:732px;top:780px;width:2px;height:2px;background:#a0a0a0"></div>
<div style="left:732px;top:784px;width:2px;height:2px;background:#a0a0a0"></div>
<div style="left:749px;top:774px;width:15px;height:15px;background:#fafafa;border:1px solid #7a7a7a"></div>
<svg style="left:753px;top:777px;" width="6" height="9" viewBox="0 0 6 9"><path d="M5 0.5 V8.5 L0.5 4.5Z" fill="#606060"/></svg>
<div style="left:763px;top:774px;width:295px;height:15px;background:#fcfcfc;border:1px solid #7a7a7a"></div>
<div style="left:1058px;top:775px;width:127px;height:13px;background:#dcdcdc"></div>
<div style="left:1184px;top:774px;width:15px;height:15px;background:#fafafa;border:1px solid #7a7a7a"></div>
<svg style="left:1189px;top:777px;" width="6" height="9" viewBox="0 0 6 9"><path d="M0.5 0.5 V8.5 L5 4.5Z" fill="#606060"/></svg>
<div style="left:1px;top:795px;width:1480px;height:1px;background:#c6c6c6"></div>
<div style="left:1px;top:796px;width:1480px;height:21px;background:#f3f3f3"></div>
<div style="left:0px;top:817px;width:1482px;height:1px;background:#8a8a8a"></div>
<div style="left:0px;top:818px;width:1493px;height:1px;background:#fbfbfb"></div>
<div style="left:8px;top:800.90px;font-size:12px;line-height:12px;color:#333;font-family:'Liberation Sans',sans-serif;">就绪</div>
<svg style="left:52px;top:800px;" width="15" height="13" viewBox="0 0 15 13"><path d="M7.5 11.4 H0.6 V0.6 H13.4 V3.5" fill="none" stroke="#444" stroke-width="1.1"/><path d="M0.6 1.8 H13.4" stroke="#444" stroke-width="1"/><path d="M2.5 4.8 H5.5 M2.5 7.3 H5.5 M2.5 9.5 H4.5" stroke="#444" stroke-width="1"/><circle cx="9.8" cy="8.2" r="3.6" fill="#f3f3f3" stroke="#444" stroke-width="1.1"/><circle cx="9.8" cy="8.2" r="1.3" fill="#444"/></svg>
<svg style="left:83px;top:799px;" width="17" height="15" viewBox="0 0 17 15"><circle cx="7" cy="3" r="2.3" fill="none" stroke="#444" stroke-width="1.1"/><path d="M1 3.5 C2 6 4 6.2 5 6.4 L4.6 10.5 C4.4 12 3.5 13 2.5 13.8 M13 3.5 C12 6 10 6.2 9 6.4 L8.8 8" fill="none" stroke="#444" stroke-width="1.1"/><path d="M8.5 10.5 L11 13.5 L16 7" fill="none" stroke="#444" stroke-width="1.1"/></svg>
<div style="left:102px;top:801.40px;font-size:12px;line-height:12px;color:#333;font-family:'Liberation Sans',sans-serif;">辅助功能: 一切就绪</div>
<div style="left:1165px;top:796px;width:40px;height:21px;background:#d4d4d4"></div>
<svg style="left:1178px;top:800px;" width="13" height="13" viewBox="0 0 13 13"><path d="M0.5 0.5 H12.5 V12.5 H0.5Z M4.5 0.5 V12.5 M8.5 0.5 V12.5 M0.5 4.5 H12.5 M0.5 8.5 H12.5" fill="none" stroke="#444"/></svg>
<svg style="left:1218px;top:799px;" width="14" height="13" viewBox="0 0 14 13"><path d="M0.7 0.7 H13.3 V12.3 H0.7Z M3.5 2.5 H10.5 V10.3 H3.5Z" fill="none" stroke="#444" stroke-width="1.1"/><path d="M5 4.6 H9 M5 6.5 H9 M5 8.4 H9" stroke="#444" stroke-width="0.9"/></svg>
<svg style="left:1258px;top:799px;" width="14" height="13" viewBox="0 0 14 13"><path d="M0.7 0.7 H13.3 V12.3 H0.7Z M4.5 0.7 V7 M8.6 0.7 V7 H0.7" fill="none" stroke="#444" stroke-width="1.1"/></svg>
<div style="left:1291px;top:806px;width:7px;height:1px;background:#555"></div>
<div style="left:1304px;top:806px;width:100px;height:1px;background:#666"></div>
<div style="left:1352px;top:801px;width:5px;height:11px;background:#6a6a6a"></div>
<svg style="left:1408px;top:801px;" width="10" height="10" viewBox="0 0 10 10"><path d="M5 0.5 V9.5 M0.5 5 H9.5" stroke="#555"/></svg>
<div style="left:1430.5px;top:800.31px;font-size:13px;line-height:13px;color:#444;font-family:'Liberation Sans',sans-serif;">100%</div>
<div style="left:1221px;top:214px;width:260px;height:581px;background:#e6e6e6"></div>
<div style="left:1234px;top:231.17px;font-size:20px;line-height:20px;color:#217346;font-family:'Liberation Sans',sans-serif;letter-spacing:1.1px">数据透视表字段</div>
<svg style="left:1411px;top:233px;" width="10" height="6" viewBox="0 0 10 6"><path d="M0.5 0.5 H9 L4.75 5.5Z" fill="#6a6a6a"/></svg>
<svg style="left:1452px;top:231px;" width="11" height="11" viewBox="0 0 11 11"><path d="M1 1 L10 10 M10 1 L1 10" stroke="#555" stroke-width="1.8"/></svg>
<div style="left:1234px;top:268.40px;font-size:12px;line-height:12px;color:#444;font-family:'Liberation Sans',sans-serif;">选择要添加到报表的字段:</div>
<div style="left:1423px;top:260px;width:44px;height:27px;background:#fcfcfc;border:1px solid #c6c6c6"></div>
<svg style="left:1431px;top:265px;" width="17" height="16" viewBox="0 0 17 16"><path d="M8.5 1 L10 3 L12.6 2.5 L13.2 5 L15.5 6.3 L14.5 8.5 L15.5 10.7 L13.2 12 L12.6 14.5 L10 14 L8.5 16 L7 14 L4.4 14.5 L3.8 12 L1.5 10.7 L2.5 8.5 L1.5 6.3 L3.8 5 L4.4 2.5 L7 3Z" fill="none" stroke="#444" stroke-width="1.1" stroke-linejoin="round"/><circle cx="8.5" cy="8.5" r="2.6" fill="none" stroke="#444" stroke-width="1.1"/></svg>
<svg style="left:1455px;top:271px;" width="8" height="5" viewBox="0 0 8 5"><path d="M0 0 H7.5 L3.75 4.5Z" fill="#6a6a6a"/></svg>
<div style="left:1233px;top:301px;width:234px;height:22px;background:#fcfcfb;border:1px solid #b9b9b9"></div>
<div style="left:1235.5px;top:306.40px;font-size:12px;line-height:12px;color:#555;font-family:'Liberation Sans',sans-serif;">搜索</div>
<svg style="left:1449px;top:303px;" width="18" height="18" viewBox="0 0 18 18"><circle cx="11" cy="7" r="5.3" fill="none" stroke="#444" stroke-width="1.2"/><line x1="7.2" y1="10.8" x2="1.5" y2="16.5" stroke="#444" stroke-width="1.3"/></svg>
<div style="left:1233px;top:341px;width:234px;height:173px;background:#fcfcfb"></div>
<div style="left:1233px;top:341px;width:218px;height:173px;overflow:hidden">
<div style="left:2px;top:-1px;width:13px;height:13px;border:1px solid #6a6a6a;background:#fcfcfb"></div>
<svg style="left:3px;top:0px;" width="11" height="11" viewBox="0 0 11 11"><path d="M1.8 5.5 L4.3 8.5 L9.5 1.8" fill="none" stroke="#666" stroke-width="1.2"/></svg>
<div style="left:21px;top:1.40px;font-size:12px;line-height:12px;color:#333;font-family:'Liberation Sans',sans-serif;font-weight:bold;">发票类型</div>
<div style="left:2px;top:20px;width:13px;height:13px;border:1px solid #6a6a6a;background:#fcfcfb"></div>
<div style="left:21px;top:22.40px;font-size:12px;line-height:12px;color:#333;font-family:'Liberation Sans',sans-serif;">合计金额</div>
<div style="left:2px;top:41px;width:13px;height:13px;border:1px solid #6a6a6a;background:#fcfcfb"></div>
<svg style="left:3px;top:42px;" width="11" height="11" viewBox="0 0 11 11"><path d="M1.8 5.5 L4.3 8.5 L9.5 1.8" fill="none" stroke="#666" stroke-width="1.2"/></svg>
<div style="left:21px;top:43.40px;font-size:12px;line-height:12px;color:#333;font-family:'Liberation Sans',sans-serif;font-weight:bold;">发票状态</div>
<div style="left:2px;top:62px;width:13px;height:13px;border:1px solid #6a6a6a;background:#fcfcfb"></div>
<div style="left:21px;top:64.40px;font-size:12px;line-height:12px;color:#333;font-family:'Liberation Sans',sans-serif;">客户名称</div>
<div style="left:2px;top:83px;width:13px;height:13px;border:1px solid #6a6a6a;background:#fcfcfb"></div>
<div style="left:21px;top:85.40px;font-size:12px;line-height:12px;color:#333;font-family:'Liberation Sans',sans-serif;">税额</div>
<div style="left:2px;top:104px;width:13px;height:13px;border:1px solid #6a6a6a;background:#fcfcfb"></div>
<svg style="left:3px;top:105px;" width="11" height="11" viewBox="0 0 11 11"><path d="M1.8 5.5 L4.3 8.5 L9.5 1.8" fill="none" stroke="#666" stroke-width="1.2"/></svg>
<div style="left:21px;top:106.40px;font-size:12px;line-height:12px;color:#333;font-family:'Liberation Sans',sans-serif;font-weight:bold;">开票日期</div>
<div style="left:2px;top:125px;width:13px;height:13px;border:1px solid #6a6a6a;background:#fcfcfb"></div>
<div style="left:21px;top:127.40px;font-size:12px;line-height:12px;color:#333;font-family:'Liberation Sans',sans-serif;">作废日期</div>
</div>
<div style="left:1233px;top:341px;width:234px;height:0px;"></div>
<svg style="left:1435px;top:383px;" width="12" height="12" viewBox="0 0 12 12"><path d="M0.5 0.5 H11.5 L7.3 5.5 V11.5 H4.7 V5.5Z" fill="none" stroke="#444"/></svg>
<div style="left:1235px;top:497.40px;font-size:12px;line-height:12px;color:#333;font-family:'Liberation Sans',sans-serif;">更多表格...</div>
<div style="left:1451px;top:343px;width:15px;height:15px;background:#fafafa;border:1px solid #8a8a8a"></div>
<svg style="left:1454px;top:347px;" width="9" height="6" viewBox="0 0 9 6"><path d="M0.5 5 L4.5 0.5 L8.5 5Z" fill="#707070"/></svg>
<div style="left:1451px;top:358px;width:15px;height:29px;background:#dadada"></div>
<div style="left:1451px;top:387px;width:15px;height:110px;background:#fcfcfc;border:1px solid #7a7a7a"></div>
<div style="left:1451px;top:497px;width:15px;height:15px;background:#fafafa;border:1px solid #8a8a8a"></div>
<svg style="left:1454px;top:502px;" width="9" height="6" viewBox="0 0 9 6"><path d="M0.5 0.5 L4.5 5 L8.5 0.5Z" fill="#707070"/></svg>
<div style="left:1235px;top:530px;width:232px;height:1px;border-top:1px dotted #c8c8c8"></div>
<div style="left:1237px;top:539.40px;font-size:12px;line-height:12px;color:#444;font-family:'Liberation Sans',sans-serif;">在以下区域间拖动字段:</div>
<svg style="left:1240px;top:572px;" width="11" height="11" viewBox="0 0 11 11"><path d="M0.5 0.5 H10.5 L6.5 5 V10.5 H4.5 V5Z" fill="#888"/></svg>
<div style="left:1259px;top:574.90px;font-size:12px;line-height:12px;color:#444;font-family:'Liberation Sans',sans-serif;">筛选</div>
<svg style="left:1359px;top:573px;" width="10" height="10" viewBox="0 0 10 10"><path d="M1 0 V10 M3.5 0 V10 M6 0 V10 M8.5 0 V10" stroke="#999" stroke-width="1.2"/></svg>
<div style="left:1377px;top:573.90px;font-size:12px;line-height:12px;color:#444;font-family:'Liberation Sans',sans-serif;">列</div>
<div style="left:1236px;top:593px;width:109px;height:54px;background:#fcfcfb"></div>
<div style="left:1354px;top:593px;width:114px;height:54px;background:#fcfcfb"></div>
<div style="left:1351px;top:570px;width:1px;height:168px;background:#c4c4c4"></div>
<div style="left:1236px;top:653px;width:232px;height:1px;background:#c4c4c4"></div>
<div style="left:1237px;top:595px;width:107px;height:23px;background:#fcfcfb;border:1px solid #a8a8a8"></div>
<div style="left:1244px;top:601.40px;font-size:12px;line-height:12px;color:#333;font-family:'Liberation Sans',sans-serif;">发票状态</div>
<svg style="left:1327px;top:604px;" width="8" height="5" viewBox="0 0 8 5"><path d="M0 0 H7.5 L3.75 4.5Z" fill="#444"/></svg>
<svg style="left:1241px;top:663px;" width="11" height="9" viewBox="0 0 11 9"><path d="M0 0.5 H10 M0 3 H10 M0 5.5 H10 M0 8 H10" stroke="#999" stroke-width="1"/></svg>
<div style="left:1259px;top:665.40px;font-size:12px;line-height:12px;color:#444;font-family:'Liberation Sans',sans-serif;">行</div>
<svg style="left:1359px;top:663px;" width="10" height="9" viewBox="0 0 10 9"><path d="M9 0.5 H0.8 L5 4.5 L0.8 8.5 H9" fill="none" stroke="#888" stroke-width="1.2"/></svg>
<div style="left:1377px;top:663.90px;font-size:12px;line-height:12px;color:#444;font-family:'Liberation Sans',sans-serif;">值</div>
<div style="left:1236px;top:683px;width:109px;height:55px;background:#fcfcfb"></div>
<div style="left:1354px;top:683px;width:114px;height:55px;background:#fcfcfb"></div>
<div style="left:1237px;top:685px;width:107px;height:23px;background:#fcfcfb;border:1px solid #a8a8a8"></div>
<div style="left:1244px;top:691.40px;font-size:12px;line-height:12px;color:#333;font-family:'Liberation Sans',sans-serif;">开票日期</div>
<svg style="left:1327px;top:694px;" width="8" height="5" viewBox="0 0 8 5"><path d="M0 0 H7.5 L3.75 4.5Z" fill="#444"/></svg>
<div style="left:1237px;top:710px;width:107px;height:23px;background:#fcfcfb;border:1px solid #a8a8a8"></div>
<div style="left:1244px;top:716.40px;font-size:12px;line-height:12px;color:#333;font-family:'Liberation Sans',sans-serif;">发票类型</div>
<svg style="left:1327px;top:719px;" width="8" height="5" viewBox="0 0 8 5"><path d="M0 0 H7.5 L3.75 4.5Z" fill="#444"/></svg>
<div style="left:1355px;top:685px;width:112px;height:23px;background:#fcfcfb;border:1px solid #a8a8a8"></div>
<div style="left:1362px;top:691.40px;font-size:12px;line-height:12px;color:#333;font-family:'Liberation Sans',sans-serif;">求和项:价税合...</div>
<svg style="left:1450px;top:694px;" width="8" height="5" viewBox="0 0 8 5"><path d="M0 0 H7.5 L3.75 4.5Z" fill="#444"/></svg>
<div style="left:1239px;top:765px;width:13px;height:13px;background:#fcfcfb;border:1px solid #8a8a8a"></div>
<div style="left:1258px;top:766.90px;font-size:12px;line-height:12px;color:#333;font-family:'Liberation Sans',sans-serif;">延迟布局更新</div>
<div style="left:1435px;top:759px;width:32px;height:23px;background:#fbfbfb"></div>
<div style="left:1439px;top:765.40px;font-size:12px;line-height:12px;color:#b0b0b0;font-family:'Liberation Sans',sans-serif;">更新</div>
<div style="left:96px;top:70px;width:1px;height:91px;background:#c6c6c6"></div>
<div style="left:374px;top:70px;width:1px;height:91px;background:#c6c6c6"></div>
<div style="left:629px;top:70px;width:1px;height:91px;background:#c6c6c6"></div>
<div style="left:785px;top:70px;width:1px;height:91px;background:#c6c6c6"></div>
<div style="left:984px;top:70px;width:1px;height:91px;background:#c6c6c6"></div>
<div style="left:1126px;top:70px;width:1px;height:91px;background:#c6c6c6"></div>
<div style="left:1365px;top:70px;width:1px;height:91px;background:#c6c6c6"></div>
<div style="left:1434px;top:70px;width:1px;height:91px;background:#c6c6c6"></div>
<div style="left:22.5px;top:149.40px;font-size:12px;line-height:12px;color:#444444;font-family:'Liberation Sans',sans-serif;">剪贴板</div>
<div style="left:216px;top:149.40px;font-size:12px;line-height:12px;color:#444444;font-family:'Liberation Sans',sans-serif;">字体</div>
<div style="left:470px;top:149.40px;font-size:12px;line-height:12px;color:#444444;font-family:'Liberation Sans',sans-serif;">对齐方式</div>
<div style="left:687px;top:149.40px;font-size:12px;line-height:12px;color:#444444;font-family:'Liberation Sans',sans-serif;">数字</div>
<div style="left:873px;top:149.40px;font-size:12px;line-height:12px;color:#444444;font-family:'Liberation Sans',sans-serif;">样式</div>
<div style="left:1037.5px;top:149.40px;font-size:12px;line-height:12px;color:#444444;font-family:'Liberation Sans',sans-serif;">单元格</div>
<div style="left:1234px;top:149.40px;font-size:12px;line-height:12px;color:#444444;font-family:'Liberation Sans',sans-serif;">编辑</div>
<div style="left:1387.5px;top:149.40px;font-size:12px;line-height:12px;color:#444444;font-family:'Liberation Sans',sans-serif;">保存</div>
<svg style="left:85px;top:152px;" width="9" height="9" viewBox="0 0 9 9"><path d="M0.5 6 V0.5 H6" fill="none" stroke="#444"/><path d="M2.5 2.5 L7.5 7.5 M3.8 7.8 H7.8 V3.8" fill="none" stroke="#444"/></svg>
<svg style="left:363px;top:152px;" width="9" height="9" viewBox="0 0 9 9"><path d="M0.5 6 V0.5 H6" fill="none" stroke="#444"/><path d="M2.5 2.5 L7.5 7.5 M3.8 7.8 H7.8 V3.8" fill="none" stroke="#444"/></svg>
<svg style="left:618px;top:152px;" width="9" height="9" viewBox="0 0 9 9"><path d="M0.5 6 V0.5 H6" fill="none" stroke="#444"/><path d="M2.5 2.5 L7.5 7.5 M3.8 7.8 H7.8 V3.8" fill="none" stroke="#444"/></svg>
<svg style="left:774px;top:152px;" width="9" height="9" viewBox="0 0 9 9"><path d="M0.5 6 V0.5 H6" fill="none" stroke="#444"/><path d="M2.5 2.5 L7.5 7.5 M3.8 7.8 H7.8 V3.8" fill="none" stroke="#444"/></svg>
<svg style="left:17px;top:72px;" width="32" height="34" viewBox="0 0 32 34"><rect x="2.5" y="5.5" width="19" height="23" fill="#fdf3e1" stroke="#d67f1c" stroke-width="1.6"/><rect x="4.5" y="7.5" width="15" height="19" fill="#fbfbfb" stroke="none"/><path d="M6.5 9.5 V5 H9.5 C9.5 2 14.5 2 14.5 5 H17.5 V9.5 Z" fill="#fbfbfb" stroke="#444" stroke-width="1.1"/><rect x="15.5" y="14.5" width="13.5" height="17" fill="#fbfbfb" stroke="#333" stroke-width="1.3"/></svg>
<div style="left:18px;top:108.90px;font-size:12px;line-height:12px;color:#444444;font-family:'Liberation Sans',sans-serif;">粘贴</div>
<svg style="left:28px;top:127px;" width="7" height="5" viewBox="0 0 7 5"><path d="M0.7 0.7 L3.5 3.5 L6.3 0.7" fill="none" stroke="#555" stroke-width="1.2"/></svg>
<svg style="left:56px;top:72px;" width="12" height="18" viewBox="0 0 12 18"><path d="M2.5 1 L8.5 12 M9.5 1 L3.5 12" stroke="#444" stroke-width="1.1"/><circle cx="3" cy="14.5" r="2.2" fill="none" stroke="#2b88d8" stroke-width="1.3"/><circle cx="9" cy="14.5" r="2.2" fill="none" stroke="#2b88d8" stroke-width="1.3"/></svg>
<svg style="left:53px;top:97px;" width="18" height="17" viewBox="0 0 18 17"><path d="M4.5 12.5 H0.5 V0.5 H6 L7.5 2" fill="none" stroke="#333" stroke-width="1.1"/><path d="M6.5 3.5 H12.5 L16.5 7.5 V15.5 H6.5 Z M12.5 3.5 V7.5 H16.5 M9 10 H14 M9 12.5 H14" fill="none" stroke="#333" stroke-width="1.1"/></svg>
<svg style="left:77px;top:104px;" width="7" height="5" viewBox="0 0 7 5"><path d="M0.7 0.7 L3.5 3.5 L6.3 0.7" fill="none" stroke="#555" stroke-width="1.2"/></svg>
<svg style="left:53px;top:120px;" width="18" height="16" viewBox="0 0 18 16"><path d="M11 4 L14.5 0.8 C15.5 0 17.5 1.5 16.8 2.8 L13.5 6.5" fill="none" stroke="#333" stroke-width="1.1"/><path d="M9.5 3.5 L14 8 L11 11 L6.5 6.5 Z" fill="#fbfbfb" stroke="#333" stroke-width="1.1"/><path d="M6.5 6.5 L1 9.5 L5.5 15 L11 11 Z" fill="#e8912e" stroke="#d67f1c" stroke-width="1"/><path d="M3.5 10 L7 12.5" stroke="#fbfbfb" stroke-width="1.2"/></svg>
<div style="left:105px;top:78px;width:172px;height:23px;background:#fdfdfd;border:1px solid #c6c6c6"></div>
<div style="left:108px;top:84.40px;font-size:12px;line-height:12px;color:#222;font-family:'Liberation Sans',sans-serif;">宋体</div>
<svg style="left:267px;top:88px;" width="7" height="5" viewBox="0 0 7 5"><path d="M0.7 0.7 L3.5 3.5 L6.3 0.7" fill="none" stroke="#333" stroke-width="1.2"/></svg>
<div style="left:279px;top:78px;width:40px;height:23px;background:#fdfdfd;border:1px solid #c6c6c6"></div>
<div style="left:282.5px;top:82.81px;font-size:13px;line-height:13px;color:#222;font-family:'Liberation Sans',sans-serif;">12</div>
<svg style="left:309px;top:88px;" width="7" height="5" viewBox="0 0 7 5"><path d="M0.7 0.7 L3.5 3.5 L6.3 0.7" fill="none" stroke="#333" stroke-width="1.2"/></svg>
<svg style="left:324px;top:80px;" width="18" height="15" viewBox="0 0 18 15"><path d="M1 14 L6.5 1 L12 14 M3 9.5 H10" fill="none" stroke="#333" stroke-width="1.2"/><path d="M12.5 4.5 L14.5 2.2 L16.5 4.5" fill="none" stroke="#2b88d8" stroke-width="1.2"/></svg>
<svg style="left:349px;top:80px;" width="17" height="15" viewBox="0 0 17 15"><path d="M1.5 14 L6 3 L10.5 14 M3.2 10 H8.8" fill="none" stroke="#333" stroke-width="1.2"/><path d="M11 1.5 L13 3.8 L15 1.5" fill="none" stroke="#2b88d8" stroke-width="1.2"/></svg>
<div style="left:112.5px;top:113.81px;font-size:13px;line-height:13px;color:#333;font-family:'Liberation Sans',sans-serif;font-weight:bold;">B</div>
<div style="left:137px;top:113.81px;font-size:13px;line-height:13px;color:#333;font-family:'Liberation Serif',serif;"><i>I</i></div>
<div style="left:159px;top:113.31px;font-size:13px;line-height:13px;color:#333;font-family:'Liberation Sans',sans-serif;">U</div>
<div style="left:159px;top:126px;width:9px;height:1px;background:#333"></div>
<svg style="left:178px;top:120px;" width="7" height="5" viewBox="0 0 7 5"><path d="M0.7 0.7 L3.5 3.5 L6.3 0.7" fill="none" stroke="#555" stroke-width="1.2"/></svg>
<div style="left:194px;top:112px;width:1px;height:19px;background:#d2d2d2"></div>
<svg style="left:202px;top:112px;" width="16" height="16" viewBox="0 0 16 16"><path d="M0.5 0.5 H15.5 V13.5 H0.5 Z M8 0.5 V13.5 M0.5 7 H15.5" fill="none" stroke="#555" stroke-width="0.9" stroke-dasharray="1 1.2"/><circle cx="8" cy="7" r="1" fill="none" stroke="#444" stroke-width="0.8"/><rect x="0" y="14" width="16" height="1.6" fill="#222"/></svg>
<svg style="left:224px;top:120px;" width="7" height="5" viewBox="0 0 7 5"><path d="M0.7 0.7 L3.5 3.5 L6.3 0.7" fill="none" stroke="#555" stroke-width="1.2"/></svg>
<div style="left:240px;top:112px;width:1px;height:19px;background:#d2d2d2"></div>
<svg style="left:248px;top:112px;" width="17" height="17" viewBox="0 0 17 17"><path d="M3 8 L8 3 L12 7 L7 12 Z" fill="#fbfbfb" stroke="#333" stroke-width="1.1"/><path d="M7 3 V1.5 C7 0.5 9 0.5 9 1.5 V6" fill="none" stroke="#333" stroke-width="1"/><path d="M12.5 6 C14 7 14 9 13.5 10" fill="none" stroke="#1c5fa8" stroke-width="1.5"/><rect x="0" y="13" width="17" height="4" fill="#ffff00"/></svg>
<svg style="left:270px;top:120px;" width="7" height="5" viewBox="0 0 7 5"><path d="M0.7 0.7 L3.5 3.5 L6.3 0.7" fill="none" stroke="#555" stroke-width="1.2"/></svg>
<svg style="left:287px;top:113px;" width="16" height="16" viewBox="0 0 16 16"><path d="M3 10.5 L8 0.8 L13 10.5 M4.8 7 H11.2" fill="none" stroke="#333" stroke-width="1.1"/><rect x="0" y="12" width="16" height="4" fill="#e81123"/></svg>
<svg style="left:309px;top:120px;" width="7" height="5" viewBox="0 0 7 5"><path d="M0.7 0.7 L3.5 3.5 L6.3 0.7" fill="none" stroke="#555" stroke-width="1.2"/></svg>
<div style="left:325px;top:112px;width:1px;height:19px;background:#d2d2d2"></div>
<div style="left:334.5px;top:112.46px;font-size:8px;line-height:8px;color:#555;font-family:'Liberation Sans',sans-serif;">wén</div>
<div style="left:336px;top:119.83px;font-size:10px;line-height:10px;color:#2b88d8;font-family:'Liberation Sans',sans-serif;">文</div>
<svg style="left:356px;top:120px;" width="7" height="5" viewBox="0 0 7 5"><path d="M0.7 0.7 L3.5 3.5 L6.3 0.7" fill="none" stroke="#555" stroke-width="1.2"/></svg>
<div style="left:387px;top:81px;width:14px;height:1.2px;background:#333"></div>
<div style="left:390px;top:85px;width:8px;height:1.2px;background:#333"></div>
<div style="left:387px;top:89px;width:14px;height:1.2px;background:#333"></div>
<div style="left:407px;top:78px;width:22px;height:23px;background:#c8c8c8;border:1px solid #8c8c8c"></div>
<div style="left:411px;top:84px;width:14px;height:1.2px;background:#333"></div>
<div style="left:414px;top:88px;width:8px;height:1.2px;background:#333"></div>
<div style="left:411px;top:92px;width:14px;height:1.2px;background:#333"></div>
<div style="left:435px;top:88px;width:14px;height:1.2px;background:#333"></div>
<div style="left:438px;top:92px;width:8px;height:1.2px;background:#333"></div>
<div style="left:435px;top:96px;width:14px;height:1.2px;background:#333"></div>
<div style="left:457px;top:79px;width:1px;height:21px;background:#d2d2d2"></div>
<svg style="left:464px;top:80px;" width="20" height="17" viewBox="0 0 20 17"><text x="0" y="0" transform="translate(3,13) rotate(-45)" font-family="Liberation Sans" font-size="10" fill="#444">ab</text><path d="M3 16 L15.5 3.5 M10.5 3.5 H15.5 V8.5" fill="none" stroke="#2b88d8" stroke-width="1.2"/></svg>
<svg style="left:486px;top:89px;" width="7" height="5" viewBox="0 0 7 5"><path d="M0.7 0.7 L3.5 3.5 L6.3 0.7" fill="none" stroke="#555" stroke-width="1.2"/></svg>
<div style="left:387px;top:114px;width:14px;height:1.2px;background:#333"></div>
<div style="left:387px;top:118px;width:9px;height:1.2px;background:#333"></div>
<div style="left:387px;top:122px;width:14px;height:1.2px;background:#333"></div>
<div style="left:387px;top:126px;width:9px;height:1.2px;background:#333"></div>
<div style="left:411px;top:114px;width:14px;height:1.2px;background:#333"></div>
<div style="left:413px;top:118px;width:10px;height:1.2px;background:#333"></div>
<div style="left:411px;top:122px;width:14px;height:1.2px;background:#333"></div>
<div style="left:413px;top:126px;width:10px;height:1.2px;background:#333"></div>
<div style="left:435px;top:114px;width:14px;height:1.2px;background:#333"></div>
<div style="left:440px;top:118px;width:9px;height:1.2px;background:#333"></div>
<div style="left:435px;top:122px;width:14px;height:1.2px;background:#333"></div>
<div style="left:440px;top:126px;width:9px;height:1.2px;background:#333"></div>
<div style="left:457px;top:112px;width:1px;height:19px;background:#d2d2d2"></div>
<svg style="left:466px;top:113px;" width="15" height="14" viewBox="0 0 15 14"><path d="M0 0.6 H14 M0 13.4 H14 M8 4.6 H14 M8 8.6 H14" stroke="#333" stroke-width="1.2"/><path d="M6 6.6 H1 M3.5 4 L1 6.6 L3.5 9.2" fill="none" stroke="#2b88d8" stroke-width="1.3"/></svg>
<svg style="left:490px;top:113px;" width="15" height="14" viewBox="0 0 15 14"><path d="M0 0.6 H14 M0 13.4 H14 M8 4.6 H14 M8 8.6 H14" stroke="#333" stroke-width="1.2"/><path d="M0.5 6.6 H5.5 M3 4 L5.5 6.6 L3 9.2" fill="none" stroke="#2b88d8" stroke-width="1.3"/></svg>
<div style="left:512px;top:76px;width:1px;height:59px;background:#d2d2d2"></div>
<svg style="left:522px;top:82px;" width="16" height="15" viewBox="0 0 16 15"><text x="0" y="7" font-family="Liberation Sans" font-size="8.5" fill="#444">ab</text><text x="0" y="14" font-family="Liberation Sans" font-size="8.5" fill="#444">c</text><path d="M13.5 6 C15.5 8 15 11 11 11 H6.5 M8.5 8.8 L6.3 11 L8.5 13.2" fill="none" stroke="#2b88d8" stroke-width="1.2"/></svg>
<div style="left:540px;top:84.40px;font-size:12px;line-height:12px;color:#444444;font-family:'Liberation Sans',sans-serif;">自动换行</div>
<svg style="left:520px;top:112px;" width="16" height="16" viewBox="0 0 16 16"><rect x="0.6" y="0.6" width="14.8" height="14.8" fill="none" stroke="#333" stroke-width="1.1"/><path d="M0.6 4.5 H15.4 M0.6 11.5 H15.4 M8 0.6 V4.5 M8 11.5 V15.4" stroke="#333" stroke-width="1.1"/><rect x="1" y="4.5" width="14" height="7" fill="#fbfbfb" stroke="#2b88d8" stroke-width="1.1"/><path d="M3.5 8 H12.5 M5.5 6 L3.5 8 L5.5 10 M10.5 6 L12.5 8 L10.5 10" fill="none" stroke="#2b88d8" stroke-width="1.1"/></svg>
<div style="left:539.5px;top:116.40px;font-size:12px;line-height:12px;color:#444444;font-family:'Liberation Sans',sans-serif;">合并后居中</div>
<svg style="left:610px;top:120px;" width="7" height="5" viewBox="0 0 7 5"><path d="M0.7 0.7 L3.5 3.5 L6.3 0.7" fill="none" stroke="#555" stroke-width="1.2"/></svg>
<div style="left:638px;top:78px;width:140px;height:23px;background:#fdfdfd;border:1px solid #c6c6c6"></div>
<div style="left:642px;top:84.40px;font-size:12px;line-height:12px;color:#222;font-family:'Liberation Sans',sans-serif;">日期</div>
<svg style="left:768px;top:88px;" width="7" height="5" viewBox="0 0 7 5"><path d="M0.7 0.7 L3.5 3.5 L6.3 0.7" fill="none" stroke="#333" stroke-width="1.2"/></svg>
<svg style="left:641px;top:115px;" width="17" height="14" viewBox="0 0 17 14"><rect x="0.6" y="0.6" width="15" height="8" fill="#fbfbfb" stroke="#333" stroke-width="1.1"/><text x="2" y="7.5" font-family="Liberation Sans" font-size="6.5" fill="#333">C(•)</text><ellipse cx="12" cy="7" rx="3.5" ry="1.5" fill="#fbfbfb" stroke="#d67f1c" stroke-width="1.1"/><path d="M8.5 7 V12 C8.5 14 15.5 14 15.5 12 V7 M8.5 9.5 C8.5 11 15.5 11 15.5 9.5" fill="#fbfbfb" stroke="#d67f1c" stroke-width="1.1"/></svg>
<svg style="left:664px;top:120px;" width="7" height="5" viewBox="0 0 7 5"><path d="M0.7 0.7 L3.5 3.5 L6.3 0.7" fill="none" stroke="#555" stroke-width="1.2"/></svg>
<svg style="left:679px;top:113px;" width="18" height="16" viewBox="0 0 18 16"><circle cx="4.6" cy="4.3" r="2.9" fill="none" stroke="#333" stroke-width="1.15"/><circle cx="12.4" cy="11.6" r="2.9" fill="none" stroke="#333" stroke-width="1.15"/><path d="M13.6 1.2 L3.4 14.8" stroke="#333" stroke-width="1.15"/></svg>
<svg style="left:707px;top:114px;" width="11" height="14" viewBox="0 0 11 14"><circle cx="5.3" cy="5.4" r="3.4" fill="#333"/><path d="M8.6 5.6 C8.8 9 6.5 11.8 2.6 13" fill="none" stroke="#333" stroke-width="2"/></svg>
<div style="left:727px;top:112px;width:1px;height:19px;background:#d2d2d2"></div>
<svg style="left:734px;top:113px;" width="17" height="16" viewBox="0 0 17 16"><path d="M10 4.5 H1.5 M4.5 1.5 L1.5 4.5 L4.5 7.5" fill="none" stroke="#2b88d8" stroke-width="1.2"/><text x="11" y="8.3" font-family="Liberation Sans" font-size="9.5" fill="#333">0</text><text x="2.5" y="15.3" font-family="Liberation Sans" font-size="9.5" fill="#333">.00</text></svg>
<svg style="left:758px;top:113px;" width="17" height="16" viewBox="0 0 17 16"><text x="2.5" y="8.3" font-family="Liberation Sans" font-size="9.5" fill="#333">.00</text><path d="M1 11.5 H10 M7 8.5 L10 11.5 L7 14.5" fill="none" stroke="#2b88d8" stroke-width="1.2"/><text x="8" y="15.3" font-family="Liberation Sans" font-size="9.5" fill="#333">.0</text></svg>
<svg style="left:806px;top:77px;" width="29" height="23" viewBox="0 0 29 23"><rect x="0.6" y="0.6" width="27" height="21" fill="#fbfbfb"/><rect x="5.4" y="0.6" width="12.6" height="6.6" fill="#f4a3ab"/><rect x="5.4" y="14.4" width="14.6" height="7.2" fill="#f4a3ab"/><rect x="5.4" y="7.2" width="8.2" height="7.2" fill="#8cbce8"/><path d="M0.6 0.6 H27.6 V21.6 H0.6 Z M0.6 7.2 H27.6 M0.6 14.4 H27.6 M22.8 0.6 V21.6 M18 7.2 V14.4" fill="none" stroke="#333" stroke-width="1.2"/><path d="M5.4 0.6 H18 V7.2 H5.4 Z M5.4 14.4 H20 V21.6 H5.4 Z" fill="none" stroke="#e03040" stroke-width="1.2"/><path d="M5.4 7.2 H13.6 V14.4 H5.4 Z" fill="none" stroke="#1e6fc8" stroke-width="1.2"/></svg>
<div style="left:796px;top:108.40px;font-size:12px;line-height:12px;color:#444444;font-family:'Liberation Sans',sans-serif;">条件格式</div>
<svg style="left:819px;top:127px;" width="7" height="5" viewBox="0 0 7 5"><path d="M0.7 0.7 L3.5 3.5 L6.3 0.7" fill="none" stroke="#555" stroke-width="1.2"/></svg>
<svg style="left:865px;top:77px;" width="33" height="28" viewBox="0 0 33 28"><rect x="0.6" y="0.6" width="27" height="21" fill="#fbfbfb"/><rect x="9.6" y="7" width="18" height="14.6" fill="#8cbce8"/><path d="M0.6 0.6 H27.6 V21.6 H0.6 Z M0.6 7 H9.6 M0.6 14.4 H9.6 M9.6 0.6 V21.6 M18.9 0.6 V7" fill="none" stroke="#333" stroke-width="1.2"/><path d="M9.6 7 H27.6 V21.6 H9.6 Z M9.6 14.4 H27.6 M18.9 7 V21.6" fill="none" stroke="#1e6fc8" stroke-width="1.2"/><path d="M28.8 6.8 C30 5.6 31.6 6.8 30.6 8.2 L20.6 20.8 L18.2 19 Z" fill="#fbfbfb" stroke="#333" stroke-width="1.1"/><path d="M18 18.6 C15 18.8 13.5 21.5 13 23.5 C12.6 25 10.8 26 8 26.6 C13.5 27.6 20 26.2 20.8 21 Z" fill="#6fa8dc" stroke="#2b7cd3" stroke-width="0.9"/></svg>
<div style="left:867px;top:108.40px;font-size:12px;line-height:12px;color:#444444;font-family:'Liberation Sans',sans-serif;">套用</div>
<div style="left:849px;top:123.90px;font-size:12px;line-height:12px;color:#444444;font-family:'Liberation Sans',sans-serif;">表格格式</div>
<svg style="left:902px;top:128px;" width="7" height="5" viewBox="0 0 7 5"><path d="M0.7 0.7 L3.5 3.5 L6.3 0.7" fill="none" stroke="#555" stroke-width="1.2"/></svg>
<svg style="left:930px;top:77px;" width="33" height="28" viewBox="0 0 33 28"><rect x="0.6" y="0.6" width="27" height="21" fill="#fbfbfb"/><path d="M0.6 0.6 H27.6 V21.6 H0.6 Z M5.8 0.6 V21.6 M22.6 0.6 V21.6 M0.6 16.3 H27.6" fill="none" stroke="#333" stroke-width="1.2"/><rect x="5.8" y="5" width="16.8" height="11.3" fill="#8cbce8" stroke="#1e6fc8" stroke-width="1.6"/><path d="M28.8 6.8 C30 5.6 31.6 6.8 30.6 8.2 L20.6 20.8 L18.2 19 Z" fill="#fbfbfb" stroke="#333" stroke-width="1.1"/><path d="M18 18.6 C15 18.8 13.5 21.5 13 23.5 C12.6 25 10.8 26 8 26.6 C13.5 27.6 20 26.2 20.8 21 Z" fill="#6fa8dc" stroke="#2b7cd3" stroke-width="0.9"/></svg>
<div style="left:914px;top:108.40px;font-size:12px;line-height:12px;color:#444444;font-family:'Liberation Sans',sans-serif;">单元格样式</div>
<svg style="left:942px;top:127px;" width="7" height="5" viewBox="0 0 7 5"><path d="M0.7 0.7 L3.5 3.5 L6.3 0.7" fill="none" stroke="#555" stroke-width="1.2"/></svg>
<svg style="left:998px;top:76px;" width="33" height="24" viewBox="0 0 33 24"><rect x="2.3" y="1.3" width="27.6" height="21.4" fill="#fbfbfb"/><path d="M2.3 1.3 H29.9 V22.7 H2.3 Z M2.3 8.3 H29.9 M2.3 15.4 H29.9 M11.9 1.3 V22.7 M20.7 1.3 V22.7" fill="none" stroke="#333" stroke-width="1.2"/><rect x="6.4" y="8.3" width="25.5" height="7.1" fill="#8cbce8" stroke="#1e6fc8" stroke-width="1.4"/><path d="M20.7 8.3 V15.4" stroke="#1e6fc8" stroke-width="1.3"/><path d="M2 10.3 H13 V13.3 H2 Z" fill="#fbfbfb" stroke="none"/><path d="M3 10.3 H13 M3 13.3 H13 M6.5 5.2 L0.8 11.8 L6.5 18.4" fill="none" stroke="#2b88d8" stroke-width="1.2"/></svg>
<div style="left:1002px;top:108.40px;font-size:12px;line-height:12px;color:#444444;font-family:'Liberation Sans',sans-serif;">插入</div>
<svg style="left:1013px;top:127px;" width="7" height="5" viewBox="0 0 7 5"><path d="M0.7 0.7 L3.5 3.5 L6.3 0.7" fill="none" stroke="#555" stroke-width="1.2"/></svg>
<svg style="left:1041px;top:76px;" width="32" height="24" viewBox="0 0 32 24"><rect x="1.3" y="1.3" width="27.4" height="21.4" fill="#fbfbfb"/><path d="M1.3 8.3 V1.3 H28.7 V8.3 M1.3 15.4 V22.7 H28.7 V15.4 M1.3 8.3 H5.2 M1.3 15.4 H5.2 M10.8 1.3 V22.7 M19.6 1.3 V22.7" fill="none" stroke="#333" stroke-width="1.2"/><path d="M5.2 8.3 H18.5 L21.7 11.85 L18.5 15.4 H5.2 Z" fill="#8cbce8" stroke="#1e6fc8" stroke-width="1.4"/><path d="M10.8 8.3 V15.4" stroke="#1e6fc8" stroke-width="1.3"/><path d="M18.7 7 L30.2 17.9 M30.2 7 L18.7 17.9" stroke="#e84050" stroke-width="1.2"/></svg>
<div style="left:1044px;top:108.40px;font-size:12px;line-height:12px;color:#444444;font-family:'Liberation Sans',sans-serif;">删除</div>
<svg style="left:1056px;top:127px;" width="7" height="5" viewBox="0 0 7 5"><path d="M0.7 0.7 L3.5 3.5 L6.3 0.7" fill="none" stroke="#555" stroke-width="1.2"/></svg>
<svg style="left:1083px;top:71px;" width="30" height="29" viewBox="0 0 30 29"><rect x="1.5" y="6.3" width="27" height="21.4" fill="#fbfbfb"/><path d="M1.5 6.3 H28.5 V27.7 H1.5 Z M1.5 13.3 H28.5 M1.5 20.4 H28.5 M8.5 6.3 V27.7 M21.5 6.3 V27.7" fill="none" stroke="#333" stroke-width="1.2"/><rect x="8.5" y="13.3" width="13" height="7.1" fill="#8cbce8" stroke="#1e6fc8" stroke-width="1.4"/><path d="M7.2 2.4 H22.9 M7.2 0.8 V4 M22.9 0.8 V4" stroke="#2b88d8" stroke-width="1.1"/></svg>
<div style="left:1086px;top:108.40px;font-size:12px;line-height:12px;color:#444444;font-family:'Liberation Sans',sans-serif;">格式</div>
<svg style="left:1098px;top:127px;" width="7" height="5" viewBox="0 0 7 5"><path d="M0.7 0.7 L3.5 3.5 L6.3 0.7" fill="none" stroke="#555" stroke-width="1.2"/></svg>
<svg style="left:1139px;top:72px;" width="14" height="16" viewBox="0 0 14 16"><path d="M13 1 H1.5 L7.5 8 L1.5 15 H13" fill="none" stroke="#333" stroke-width="1.2"/></svg>
<div style="left:1158px;top:76.40px;font-size:12px;line-height:12px;color:#444444;font-family:'Liberation Sans',sans-serif;">自动求和</div>
<svg style="left:1216px;top:78px;" width="7" height="5" viewBox="0 0 7 5"><path d="M0.7 0.7 L3.5 3.5 L6.3 0.7" fill="none" stroke="#555" stroke-width="1.2"/></svg>
<svg style="left:1138px;top:95px;" width="17" height="16" viewBox="0 0 17 16"><rect x="0.6" y="0.6" width="15" height="14" fill="#fbfbfb" stroke="#333" stroke-width="1.2"/><path d="M0.6 3 H15.6" stroke="#333" stroke-width="1.1"/><path d="M8 5.5 V12 M5.2 9.3 L8 12 L10.8 9.3" fill="none" stroke="#2b88d8" stroke-width="1.3"/></svg>
<div style="left:1157px;top:98.40px;font-size:12px;line-height:12px;color:#444444;font-family:'Liberation Sans',sans-serif;">填充</div>
<svg style="left:1186px;top:101px;" width="7" height="5" viewBox="0 0 7 5"><path d="M0.7 0.7 L3.5 3.5 L6.3 0.7" fill="none" stroke="#555" stroke-width="1.2"/></svg>
<svg style="left:1137px;top:117px;" width="17" height="17" viewBox="0 0 17 17"><path d="M1 10 L9.5 1.5 L15.5 7.5 L7 16 Z" fill="#fbfbfb" stroke="#8a3ea8" stroke-width="1.3"/><path d="M1 10 L4.5 6.5 L10.5 12.5 L7 16 Z" fill="#b778d0" stroke="#8a3ea8" stroke-width="1.2"/></svg>
<div style="left:1157px;top:121.40px;font-size:12px;line-height:12px;color:#444444;font-family:'Liberation Sans',sans-serif;">清除</div>
<svg style="left:1186px;top:124px;" width="7" height="5" viewBox="0 0 7 5"><path d="M0.7 0.7 L3.5 3.5 L6.3 0.7" fill="none" stroke="#555" stroke-width="1.2"/></svg>
<svg style="left:1244px;top:74px;" width="31" height="29" viewBox="0 0 31 29"><text x="0" y="12" font-family="Liberation Sans" font-size="14" fill="#2b88d8">A</text><text x="1" y="27" font-family="Liberation Sans" font-size="14" fill="#333">Z</text><path d="M14.6 7.6 H29.4 L24.4 14 V22.4 H19.6 V14 Z" fill="#fbfbfb" stroke="#333" stroke-width="1.2"/></svg>
<div style="left:1230px;top:108.40px;font-size:12px;line-height:12px;color:#444444;font-family:'Liberation Sans',sans-serif;">排序和筛选</div>
<svg style="left:1258px;top:127px;" width="7" height="5" viewBox="0 0 7 5"><path d="M0.7 0.7 L3.5 3.5 L6.3 0.7" fill="none" stroke="#555" stroke-width="1.2"/></svg>
<svg style="left:1309px;top:73px;" width="31" height="31" viewBox="0 0 31 31"><circle cx="19.5" cy="11" r="9.8" fill="#fbfbfb" stroke="#333" stroke-width="1.2"/><line x1="12.5" y1="18" x2="1" y2="29.5" stroke="#333" stroke-width="1.3"/></svg>
<div style="left:1295px;top:108.40px;font-size:12px;line-height:12px;color:#444444;font-family:'Liberation Sans',sans-serif;">查找和选择</div>
<svg style="left:1324px;top:127px;" width="7" height="5" viewBox="0 0 7 5"><path d="M0.7 0.7 L3.5 3.5 L6.3 0.7" fill="none" stroke="#555" stroke-width="1.2"/></svg>
<svg style="left:1380px;top:70px;" width="40" height="30" viewBox="0 0 40 30"><circle cx="13.4" cy="20.9" r="4.6" fill="none" stroke="#1fb1f0" stroke-width="3.1"/><path d="M23.2 22.5 A4.6 4.6 0 1 0 25 17" fill="none" stroke="#1aa9ef" stroke-width="3.1" stroke-linecap="round"/><path d="M16.5 24 L23.5 18.2" stroke="#1fb1f0" stroke-width="3.1"/><path d="M15.7 13.4 A4.6 4.6 0 0 1 24.9 13.4" fill="none" stroke="#22b4f2" stroke-width="3.1"/><path d="M15.7 13.4 A4.6 4.6 0 0 0 24.9 13.4" fill="none" stroke="#f2536e" stroke-width="3.1"/></svg>
<div style="left:1382.5px;top:109.90px;font-size:12px;line-height:12px;color:#444444;font-family:'Liberation Sans',sans-serif;">保存到</div>
<div style="left:1376.5px;top:124.40px;font-size:12px;line-height:12px;color:#444444;font-family:'Liberation Sans',sans-serif;">百度网盘</div>
<div style="left:1432px;top:45.44px;font-size:13px;line-height:13px;color:#217346;font-family:'Liberation Sans',sans-serif;">共</div>
<div style="left:1437px;top:39px;width:56px;height:125px;background:#fbfbfb;border:1px solid #c6c6c6;border-right:none;box-shadow:0 1px 3px rgba(0,0,0,0.25)"></div>
<div style="left:1450px;top:46.81px;font-size:13px;line-height:13px;color:#4a4a5a;font-family:'Liberation Sans',sans-serif;font-weight:bold;">Microsoft</div>
<div style="left:1450px;top:76.40px;font-size:12px;line-height:12px;color:#666;font-family:'Liberation Sans',sans-serif;">只需开始</div>
<div style="left:1450px;top:93.40px;font-size:12px;line-height:12px;color:#666;font-family:'Liberation Sans',sans-serif;">容，即可</div>
<div style="left:1450px;top:110.90px;font-size:12px;line-height:12px;color:#666;font-family:'Liberation Sans',sans-serif;">获得帮助</div>
<div style="left:1442px;top:130px;width:51px;height:1px;background:#dcdcdc"></div>
<svg style="left:1447px;top:137px;" width="17" height="17" viewBox="0 0 17 17"><circle cx="8.5" cy="8.5" r="7.7" fill="none" stroke="#2b7cd3" stroke-width="1.2"/><text x="5" y="13" font-family="Liberation Sans" font-size="11" fill="#2b7cd3">?</text></svg>
<div style="left:1472px;top:139.94px;font-size:13px;line-height:13px;color:#2b5797;font-family:'Liberation Sans',sans-serif;font-weight:bold;">了解</div>
</body></html>
